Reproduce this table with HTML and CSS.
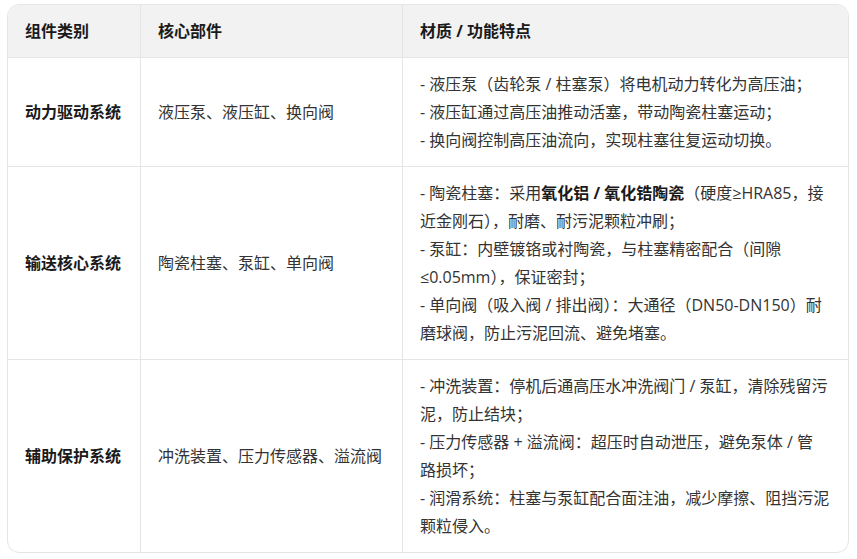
FILE: index.html
```html
<!DOCTYPE html>
<html lang="zh-CN">
<head>
<meta charset="utf-8">
<link rel="stylesheet" href="styles.css">
</head>
<body>
<div class="table-wrap">
  <table class="spec">
    <colgroup>
      <col class="c1"><col class="c2"><col class="c3">
    </colgroup>
    <thead>
      <tr><th>组件类别</th><th>核心部件</th><th>材质 / 功能特点</th></tr>
    </thead>
    <tbody>
      <tr>
        <td class="cat">动力驱动系统</td>
        <td>液压泵、液压缸、换向阀</td>
        <td>- 液压泵（齿轮泵 / 柱塞泵）将电机动力转化为高压油；<br>- 液压缸通过高压油推动活塞，带动陶瓷柱塞运动；<br>- 换向阀控制高压油流向，实现柱塞往复运动切换。</td>
      </tr>
      <tr>
        <td class="cat">输送核心系统</td>
        <td>陶瓷柱塞、泵缸、单向阀</td>
        <td>- 陶瓷柱塞：采用<strong>氧化铝 / 氧化锆陶瓷</strong>（硬度≥HRA85，接近金刚石），耐磨、耐污泥颗粒冲刷；<br>- 泵缸：内壁镀铬或衬陶瓷，与柱塞精密配合（间隙≤0.05mm），保证密封；<br>- 单向阀（吸入阀 / 排出阀）：大通径（DN50-DN150）耐磨球阀，防止污泥回流、避免堵塞。</td>
      </tr>
      <tr>
        <td class="cat">辅助保护系统</td>
        <td>冲洗装置、压力传感器、溢流阀</td>
        <td>- 冲洗装置：停机后通高压水冲洗阀门 / 泵缸，清除残留污泥，防止结块；<br>- 压力传感器 + 溢流阀：超压时自动泄压，避免泵体 / 管<br>路损坏；<br>- 润滑系统：柱塞与泵缸配合面注油，减少摩擦、阻挡污泥颗粒侵入。</td>
      </tr>
    </tbody>
  </table>
</div>
</body>
</html>
```

FILE: styles.css
```css
html, body {
  margin: 0;
  padding: 0;
  background: #ffffff;
}
body {
  padding: 4px 8px 0 7px;
  font-family: "Open Sans", "Noto Sans CJK SC", sans-serif;
  font-size: 16px;
  line-height: 28px;
  color: #333333;
}
.table-wrap {
  width: 842px;
  box-sizing: border-box;
  border: 1px solid #e5e5e5;
  border-radius: 12px;
  overflow: hidden;
}
.spec {
  width: 100%;
  border-collapse: separate;
  border-spacing: 0;
  table-layout: fixed;
}
.c1 { width: 133px; }
.c2 { width: 262px; }
.c3 { width: auto; }
.spec th, .spec td {
  box-sizing: border-box;
  padding: 12px 17px;
  border-right: 1px solid #e5e5e5;
  border-bottom: 1px solid #e5e5e5;
  text-align: left;
  vertical-align: middle;
}
.spec th:last-child, .spec td:last-child {
  border-right: none;
}
.spec tbody tr:last-child td {
  border-bottom: none;
}
.spec th {
  background: #f2f2f2;
  font-weight: 700;
  color: #1a1a1a;
}
.spec td.cat {
  font-weight: 700;
  color: #1a1a1a;
}
.spec strong {
  font-weight: 700;
  color: #1a1a1a;
}
```
